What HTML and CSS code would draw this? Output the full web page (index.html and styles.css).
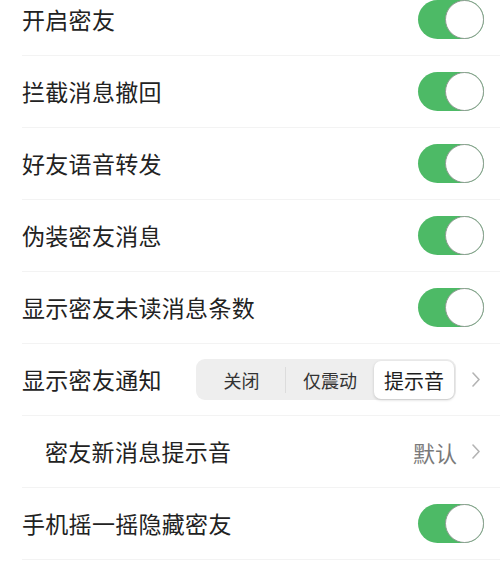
FILE: index.html
```html
<!DOCTYPE html>
<html lang="zh-CN">
<head>
<meta charset="utf-8">
<link rel="stylesheet" href="styles.css">
</head>
<body>
<div class="list">
  <div class="row"><span class="label">开启密友</span><span class="toggle"><span class="knob"></span></span></div>
  <div class="row"><span class="label">拦截消息撤回</span><span class="toggle"><span class="knob"></span></span></div>
  <div class="row"><span class="label">好友语音转发</span><span class="toggle"><span class="knob"></span></span></div>
  <div class="row"><span class="label">伪装密友消息</span><span class="toggle"><span class="knob"></span></span></div>
  <div class="row"><span class="label">显示密友未读消息条数</span><span class="toggle"><span class="knob"></span></span></div>
  <div class="row">
    <span class="label">显示密友通知</span>
    <span class="right">
      <span class="seg">
        <span class="seg-item">关闭</span>
        <span class="seg-item seg-div">仅震动</span>
        <span class="seg-item seg-on">提示音</span>
      </span>
      <svg class="chev" width="8" height="15" viewBox="0 0 8 15"><path d="M1 1 L7 7.5 L1 14" fill="none" stroke="#b4b4b4" stroke-width="1.6" stroke-linecap="round" stroke-linejoin="round"/></svg>
    </span>
  </div>
  <div class="row sub">
    <span class="label">密友新消息提示音</span>
    <span class="right">
      <span class="value">默认</span>
      <svg class="chev" width="8" height="15" viewBox="0 0 8 15"><path d="M1 1 L7 7.5 L1 14" fill="none" stroke="#b4b4b4" stroke-width="1.6" stroke-linecap="round" stroke-linejoin="round"/></svg>
    </span>
  </div>
  <div class="row"><span class="label">手机摇一摇隐藏密友</span><span class="toggle"><span class="knob"></span></span></div>
</div>
</body>
</html>
```

FILE: styles.css
```css
html, body {
  margin: 0;
  padding: 0;
  background: #ffffff;
  overflow: hidden;
}
body {
  font-family: "Noto Sans CJK SC", "Noto Sans", sans-serif;
  color: #222222;
  width: 500px;
  height: 567px;
}
.list {
  margin-top: -16px;
}
.row {
  display: flex;
  align-items: center;
  justify-content: space-between;
  height: 71px;
  margin-left: 22px;
  padding-right: 16px;
  border-bottom: 1px solid #f3f3f3;
}
.row.sub {
  padding-left: 23px;
}
.label {
  font-size: 23px;
  line-height: 1;
  letter-spacing: 0.3px;
}
.toggle {
  display: flex;
  justify-content: flex-end;
  align-items: center;
  width: 66px;
  height: 39px;
  border-radius: 20px;
  background: #4dba66;
}
.knob {
  box-sizing: border-box;
  width: 39px;
  height: 39px;
  border-radius: 50%;
  background: #ffffff;
  border: 1.5px solid #8f9c92;
}
.right {
  display: flex;
  align-items: center;
}
.chev {
  display: block;
  margin-right: 4px;
}
.seg {
  display: grid;
  grid-template-columns: 87px 89px 1fr;
  width: 260px;
  height: 41px;
  box-sizing: border-box;
  padding: 2px;
  margin-right: 16px;
  background: #eeeeee;
  border-radius: 9px;
  font-size: 18px;
  color: #333333;
}
.seg-item {
  display: flex;
  align-items: center;
  justify-content: center;
}
.seg-div {
  border-left: 1px solid #dcdcdc;
  margin: 6px 0;
}
.seg-on {
  background: #ffffff;
  border-radius: 7px;
  box-shadow: 0 1px 3px rgba(0, 0, 0, 0.18);
  font-size: 20px;
  color: #1e1e1e;
}
.value {
  font-size: 22px;
  color: #7a7a7a;
  margin-right: 15px;
}
```
